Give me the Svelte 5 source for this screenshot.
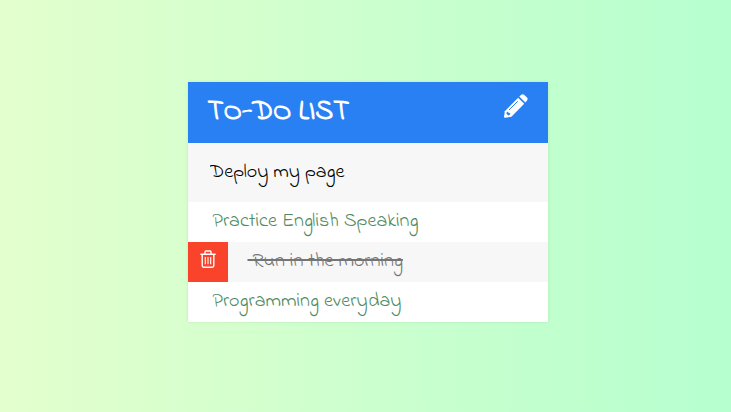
<script>
  let draft = $state('Deploy my page');
  let todos = $state([
    { text: 'Practice English Speaking', done: false, open: false },
    { text: 'Run in the morning', done: true, open: true },
    { text: 'Programming everyday', done: false, open: false }
  ]);
  let showInput = $state(true);

  function add(event) {
    event.preventDefault();
    if (!draft.trim()) return;
    todos.push({ text: draft.trim(), done: false, open: false });
    draft = '';
  }
</script>

<main>
  <section class="card">
    <header>
      <h1>TO-DO LIST</h1>
      <button class="edit" type="button" aria-label="Toggle new item field" onclick={() => (showInput = !showInput)}>
        <svg viewBox="0 0 24 24" width="24" height="24" aria-hidden="true">
          <path fill="#fff" d="M14.1 3.8 20.2 9.8 7.4 22.8 1 23.8Q0 23.8 0 23L.8 17.2Z" />
          <path fill="#fff" d="M15.3 2.6 17.3.7Q18.7-.4 20.1.7L23 3.6Q24.3 5 23 6.4L21.3 8.5Z" />
          <path fill="none" stroke="#2980f3" stroke-width="1" d="M5 16 13.7 7.3" />
          <path fill="#2980f3" d="M2.6 18.5 4 17.4 4.7 18.9 6.5 19.3 5.6 21 4.3 21.5 2.4 19.6Z" />
        </svg>
      </button>
    </header>
    {#if showInput}
      <form onsubmit={add}>
        <input type="text" aria-label="New to-do" bind:value={draft} />
      </form>
    {/if}
    <ul>
      {#each todos as todo, i}
        <li class:open={todo.open}>
          <button class="remove" type="button" aria-label="Delete {todo.text}" onclick={() => todos.splice(i, 1)}>
            <svg viewBox="0 0 16 18" width="16" height="18" fill="none" stroke="#fff" aria-hidden="true">
              <path stroke-width="1.4" d="M.4 4.2H15.6M5 4V1.8Q5 1 5.8 1H10.2Q11 1 11 1.8V4M2.2 4.5V15.6Q2.2 17.2 3.8 17.2H12.2Q13.8 17.2 13.8 15.6V4.5" />
              <path stroke-width="1.1" d="M5.3 7V14.3M8 7V14.3M10.7 7V14.3" />
            </svg>
          </button>
          <button class="text" class:done={todo.done} type="button" onclick={() => (todo.done = !todo.done)}>&nbsp;{todo.text}</button>
        </li>
      {/each}
    </ul>
  </section>
</main>

<style>
  :global(body) {
    margin: 0;
  }

  main {
    box-sizing: border-box;
    display: flex;
    justify-content: center;
    align-items: flex-start;
    min-height: 100vh;
    padding: 82px 16px 16px 20px;
    background: linear-gradient(to right, #e3ffcd, #b6ffcf);
    font-family: 'Indie Flower', Lato, sans-serif;
  }

  .card {
    flex: 0 1 360px;
    background: #fff;
    box-shadow: 0 0 3px rgba(0, 0, 0, 0.1);
  }

  header {
    display: flex;
    justify-content: space-between;
    align-items: flex-start;
    padding: 12px 20px;
    background: #2980f3;
    color: #fff;
  }

  h1 {
    margin: 0;
    font-size: 28px;
    line-height: 37px;
    font-weight: 700;
  }

  button {
    border: 0;
    padding: 0;
    background: none;
    font: inherit;
    cursor: pointer;
  }

  svg {
    display: block;
  }

  input {
    display: block;
    box-sizing: border-box;
    width: 100%;
    height: 59px;
    padding: 0 22px;
    border: 0;
    outline: 0;
    background: #f7f7f7;
    color: #000;
    font: inherit;
    font-size: 20px;
    line-height: 40px;
  }

  ul {
    margin: 0;
    padding: 0;
    list-style: none;
  }

  li {
    display: flex;
    height: 40px;
    background: #fff;
  }

  li:nth-child(even) {
    background: #f7f7f7;
  }

  .remove {
    display: flex;
    align-items: center;
    justify-content: center;
    width: 0;
    overflow: hidden;
    background: #f9432b;
    transition: width 0.2s;
  }

  .remove svg {
    margin-bottom: 6px;
  }

  li:hover .remove,
  .open .remove {
    width: 40px;
  }

  .text {
    flex: 1;
    padding: 0 20px;
    color: #4f8a62;
    font-size: 20px;
    line-height: 38px;
    text-align: left;
  }

  .done {
    color: #757575;
    text-decoration: line-through 2px;
  }
</style>
